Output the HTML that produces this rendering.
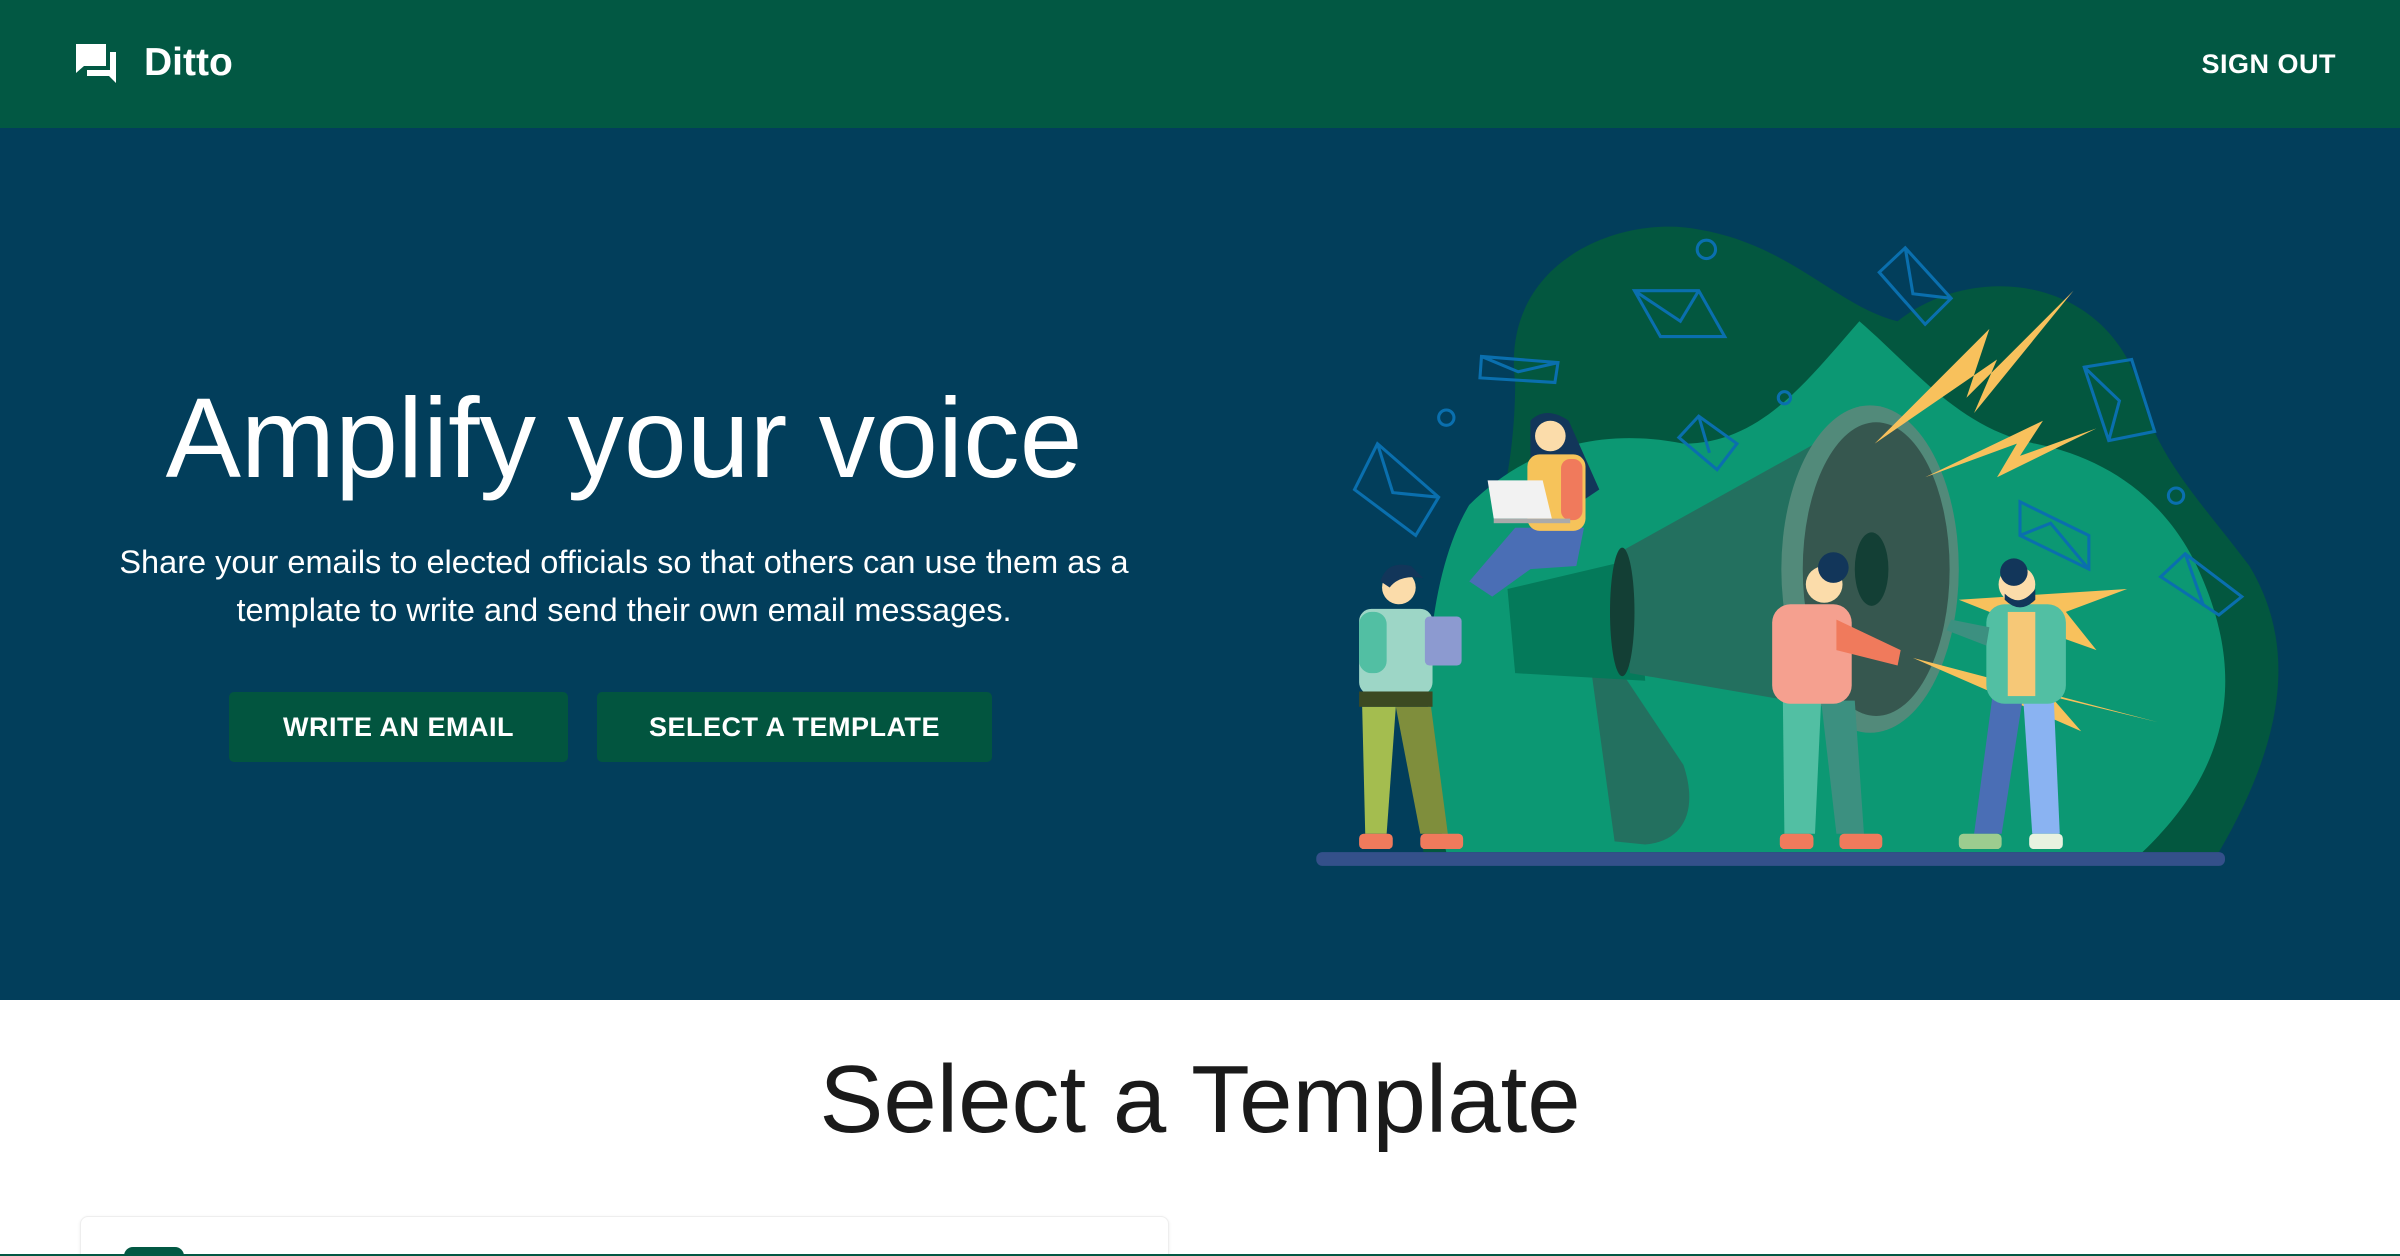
<!DOCTYPE html>
<html><head><meta charset="utf-8"><style>
*{margin:0;padding:0;box-sizing:border-box}
html{width:2400px;height:1256px;overflow:hidden}
body{width:2400px;height:1256px;overflow:hidden;background:#fff;font-family:"Liberation Sans",Roboto,sans-serif;position:relative}
.hdr{position:absolute;left:0;top:0;width:2400px;height:128px;background:#025843;color:#fff}
.logo{position:absolute;left:144px;top:41px;font-size:39px;font-weight:bold}
.so{position:absolute;right:64px;top:49px;font-size:27px;font-weight:bold;letter-spacing:0.5px}
.hero{position:absolute;left:0;top:128px;width:2400px;height:872px;background:#023e5b;color:#fff}
h1{position:absolute;left:0;width:1248px;text-align:center;top:245px;font-size:113px;font-weight:300;letter-spacing:0}
.p{position:absolute;left:0;width:1248px;text-align:center;top:410px;font-size:32.5px;line-height:48px}
.btn{position:absolute;top:564px;height:70px;background:#02553f;border-radius:5px;color:#fff;font-size:27px;font-weight:bold;text-align:center;line-height:70px;letter-spacing:.5px}
h2{position:absolute;left:0;width:2400px;text-align:center;top:1045px;font-size:96px;font-weight:400;color:#1a1a1a}
.card{position:absolute;left:80px;top:1216px;width:1089px;height:60px;border:1px solid #eee;border-radius:8px;box-shadow:0 1px 3px rgba(0,0,0,.08);background:#fff}
.circ{position:absolute;left:124px;top:1247px;width:60px;height:9px;border-radius:30px 30px 0 0;background:#025843}
.line{position:absolute;left:0;top:1254px;width:2400px;height:2px;background:#025843}
</style></head><body>
<div class="hdr">
<svg style="position:absolute;left:74px;top:43px" width="44" height="40" viewBox="0 0 44 40"><path d="M2 1h30v22H10l-8 7z" fill="#fff"/><path d="M36 9h6v31l-7-7H13v-6h23z" fill="#fff"/></svg>
<div class="logo">Ditto</div>
<div class="so">SIGN OUT</div>
</div>
<div class="hero">
<h1>Amplify your voice</h1>
<div class="p">Share your emails to elected officials so that others can use them as a<br>template to write and send their own email messages.</div>
<div class="btn" style="left:229px;width:339px">WRITE AN EMAIL</div>
<div class="btn" style="left:597px;width:395px">SELECT A TEMPLATE</div>
</div>
<svg style="position:absolute;left:0;top:0" width="2400" height="1256" viewBox="0 0 1568 821">
<path d="M990,250 C980,170 1060,140 1110,150 C1170,160 1200,200 1240,210 C1290,170 1380,180 1400,260 C1410,300 1440,330 1470,370 C1500,420 1495,480 1450,557 L930,557 C920,450 990,380 990,250Z" fill="#03573f"/>
<path d="M960,330 C1000,290 1050,280 1100,290 C1150,290 1180,250 1215,210 C1250,240 1280,280 1330,290 C1380,300 1420,330 1440,380 C1465,440 1460,500 1400,557 L945,557 C925,480 930,380 960,330Z" fill="#0c9873"/>
<path d="M1040,440 L1060,440 L1100,500 C1110,530 1100,550 1075,552 L1055,550 Z" fill="#23705f"/>
<path d="M985,385 L1070,365 L1075,445 L990,440Z" fill="#047a5a"/>
<path d="M1060,360 L1195,285 L1210,465 L1065,440Z" fill="#23705f"/>
<ellipse cx="1060" cy="400" rx="8" ry="42" fill="#133f35"/>
<ellipse cx="1222" cy="372" rx="58" ry="107" fill="#528a7a"/>
<ellipse cx="1226" cy="372" rx="48" ry="96" fill="#36574f"/>
<ellipse cx="1223" cy="372" rx="11" ry="24" fill="#133f35"/>
<g fill="#f8c15c">
<polygon points="1225,290 1300,215 1285,260 1355,190 1290,270 1305,235"/>
<polygon points="1258,312 1335,275 1320,298 1370,280 1305,312 1318,290"/>
<polygon points="1280,392 1390,385 1350,400 1370,425 1300,400"/>
<polygon points="1250,430 1410,472 1340,455 1360,478"/>
</g>
<g fill="none" stroke="#0a6fae" stroke-width="2">
<circle cx="1115" cy="163" r="6"/><circle cx="945" cy="273" r="5"/><circle cx="1166" cy="260" r="4"/><circle cx="1422" cy="324" r="5"/>
<path d="M1068,190 L1110,190 L1127,220 L1085,220Z M1068,190 L1098,210 L1110,190"/>
<path d="M968,233 L1018,237 L1016,250 L967,247Z M968,233 L992,243 L1018,237"/>
<path d="M885,320 L900,290 L940,325 L925,350Z M900,290 L910,322 L940,325"/>
<path d="M1228,178 L1245,162 L1275,195 L1258,212Z M1245,162 L1250,192 L1275,195"/>
<path d="M1362,240 L1393,235 L1408,282 L1378,288Z M1362,240 L1385,262 L1378,288"/>
<path d="M1097,286 L1110,272 L1135,290 L1122,307Z M1110,272 L1117,296"/>
<path d="M1320,328 L1365,350 L1365,372 L1320,350Z M1320,350 L1340,342 L1365,372"/>
<path d="M1412,377 L1428,362 L1465,390 L1450,402Z M1428,362 L1440,396"/>
</g>
<rect x="860" y="557" width="594" height="9" rx="4" fill="#34508a"/>
<path d="M890,462 L912,462 L906,545 L892,545Z" fill="#a4bd4f"/>
<path d="M912,462 L935,462 L946,545 L928,545Z" fill="#7f8e3c"/>
<rect x="888" y="398" width="48" height="56" rx="8" fill="#9dd6c6"/>
<rect x="888" y="400" width="18" height="40" rx="8" fill="#52bfa3"/>
<rect x="888" y="452" width="48" height="10" fill="#3c4a22"/>
<circle cx="914" cy="384" r="11" fill="#fbdcaa"/><path d="M902,380 Q906,366 922,370 L930,378 Q915,375 908,384Z" fill="#12365a"/>
<rect x="931" y="403" width="24" height="32" rx="3" fill="#8c9ad0"/>
<rect x="888" y="545" width="22" height="10" rx="3" fill="#f07a5c"/><rect x="928" y="545" width="28" height="10" rx="3" fill="#f07a5c"/>
<path d="M960,380 L990,345 L1035,345 L1030,370 L1000,372 L975,390Z" fill="#4a6eb5"/>
<path d="M1000,275 Q1010,265 1025,275 L1045,320 L1030,330 L1000,300Z" fill="#12365a"/>
<rect x="998" y="297" width="38" height="50" rx="8" fill="#f6c35a"/>
<rect x="1020" y="300" width="14" height="40" rx="6" fill="#f07a5c"/>
<circle cx="1013" cy="285" r="10" fill="#fbdcaa"/>
<path d="M972,314 L1008,314 L1014,339 L976,339Z" fill="#f2f2f2"/><rect x="976" y="339" width="50" height="3" fill="#aaa"/>
<path d="M1165,458 L1190,458 L1186,545 L1166,545Z" fill="#52bfa3"/>
<path d="M1190,458 L1212,458 L1218,545 L1200,545Z" fill="#3c9080"/>
<rect x="1158" y="395" width="52" height="65" rx="12" fill="#f5a08f"/>
<path d="M1200,405 L1242,425 L1240,435 L1200,425Z" fill="#f07a5c"/>
<circle cx="1192" cy="382" r="12" fill="#fbdcaa"/><circle cx="1198" cy="371" r="10" fill="#12365a"/>
<rect x="1163" y="545" width="22" height="10" rx="3" fill="#f07a5c"/><rect x="1202" y="545" width="28" height="10" rx="3" fill="#f07a5c"/>
<path d="M1302,455 L1322,455 L1308,545 L1290,545Z" fill="#4a6eb5"/>
<path d="M1322,455 L1342,455 L1346,545 L1328,545Z" fill="#8ab3f2"/>
<rect x="1298" y="395" width="52" height="65" rx="12" fill="#52bfa3"/>
<rect x="1312" y="400" width="18" height="55" fill="#f6c877"/>
<path d="M1300,410 L1275,405 L1272,412 L1298,422Z" fill="#3c9080"/>
<circle cx="1318" cy="382" r="12" fill="#fbdcaa"/><circle cx="1316" cy="374" r="9" fill="#12365a"/><path d="M1310,388 Q1320,398 1330,385 L1330,392 Q1320,402 1310,392Z" fill="#12365a"/>
<rect x="1280" y="545" width="28" height="10" rx="3" fill="#9ccc8f"/><rect x="1326" y="545" width="22" height="10" rx="3" fill="#e8f2e0"/>
</svg>
<h2>Select a Template</h2>
<div class="card"></div>
<div class="circ"></div>
<div class="line"></div>
</body></html>
